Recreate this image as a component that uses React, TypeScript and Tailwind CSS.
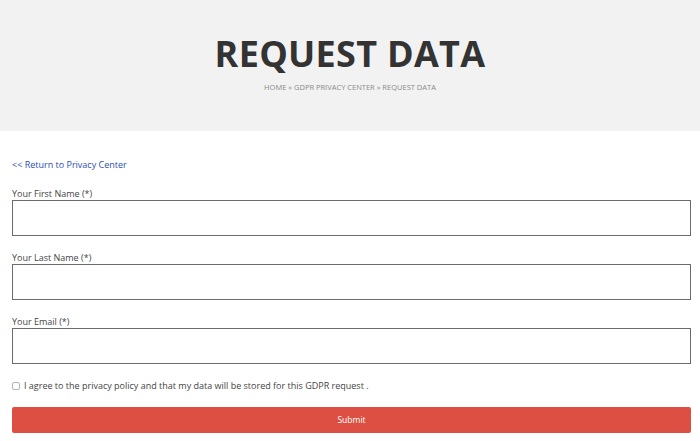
export default function App() {
  return (
    <div className="min-h-[441px] bg-white" style={{ fontFamily: '"Open Sans", "Liberation Sans", sans-serif' }}>
      <header className="flex h-[131px] flex-col items-center bg-[#f2f2f2] pt-[34px]">
        <h1 className="text-[36px] font-bold leading-[40px] tracking-[0.3px] text-[#333333]">REQUEST DATA</h1>
        <div className="mt-[8px] text-[7.5px] leading-[10px] text-[#8a8a8a]">
          HOME &raquo; GDPR PRIVACY CENTER &raquo; REQUEST DATA
        </div>
      </header>

      <main className="px-3 pt-[28px]">
        <a href="#" className="block text-[9px] leading-[12px] text-[#2a4db3]">
          &lt;&lt; Return to Privacy Center
        </a>

        <form className="mt-[17px]" onSubmit={(e) => e.preventDefault()}>
          {['Your First Name (*)', 'Your Last Name (*)', 'Your Email (*)'].map((label) => (
            <div key={label} className="mb-[16px]">
              <label className="block text-[9px] leading-[12px] text-[#444444]">{label}</label>
              <input
                type="text"
                className="block h-[36px] w-[679px] border border-[#6b6b6b] bg-white outline-none"
              />
            </div>
          ))}

          <label className="mt-[1px] flex items-center gap-[4px] text-[9px] leading-[12px] text-[#444444]">
            <span className="h-[8px] w-[8px] rounded-[2px] border border-[#b5b5b5] bg-white" />
            I agree to the privacy policy and that my data will be stored for this GDPR request .
          </label>

          <button
            type="submit"
            className="mt-[15px] h-[26px] w-[679px] rounded-[2px] bg-[#dd4f42] text-[8.5px] text-white"
          >
            Submit
          </button>
        </form>
      </main>
    </div>
  )
}
